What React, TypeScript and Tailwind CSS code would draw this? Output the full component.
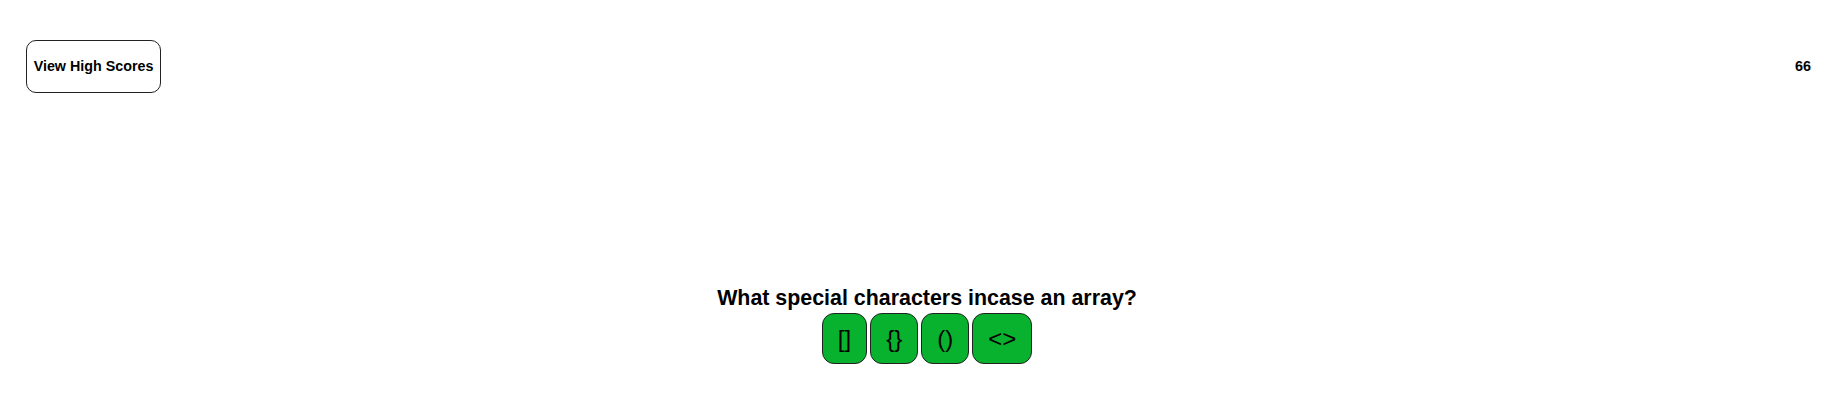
import React from 'react';

const answers = ['[]', '{}', '()', '<>'];

export default function App() {
  return (
    <div className="min-h-[419px] bg-white font-['Liberation_Sans',Arial,sans-serif] text-black">
      <header className="flex items-center justify-between pl-[26px] pr-[23px] pt-[40px]">
        <button className="h-[53px] w-[135px] rounded-[10px] border border-[#222] bg-white text-[14.3px] font-bold">
          View High Scores
        </button>
        <span className="text-[14.4px] font-bold">66</span>
      </header>

      <main className="mt-[193px] flex flex-col items-center pl-[20px]">
        <h2 className="text-[21.4px] font-bold leading-[24px]">What special characters incase an array?</h2>
        <div className="mt-[3px] flex gap-[3px]">
          {answers.map((a) => (
            <button
              key={a}
              className="h-[51px] rounded-[12px] border border-[#222] bg-[#08b22f] px-[15px] text-[24px] leading-normal"
            >
              {a}
            </button>
          ))}
        </div>
      </main>
    </div>
  );
}
